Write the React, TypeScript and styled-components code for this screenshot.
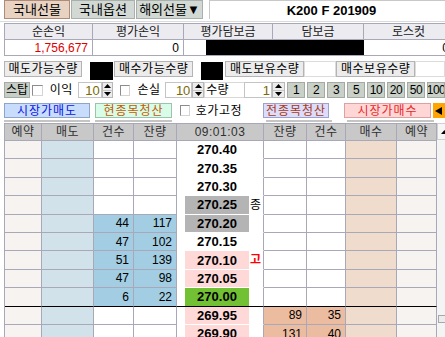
import React from "react";
import styled, { createGlobalStyle } from "styled-components";

const GlobalStyle = createGlobalStyle`
  body {
    margin: 0;
    background: #ffffff;
    font-family: "Liberation Sans", "Noto Sans CJK KR", sans-serif;
    font-size: 12px;
    color: #000;
  }
`;

const LINE = "#a8a8b8";

type Row = {
  price: string;
  kind?: "white" | "gray" | "pink" | "green";
  tag?: string;
  tagRed?: boolean;
  sellCnt?: number;
  sellQty?: number;
  buyQty?: number;
  buyCnt?: number;
  divider?: boolean;
};

const rows: Row[] = [
  { price: "270.40" },
  { price: "270.35" },
  { price: "270.30" },
  { price: "270.25", kind: "gray", tag: "종" },
  { price: "270.20", kind: "gray", sellCnt: 44, sellQty: 117 },
  { price: "270.15", sellCnt: 47, sellQty: 102 },
  { price: "270.10", kind: "pink", sellCnt: 51, sellQty: 139, tag: "고", tagRed: true },
  { price: "270.05", kind: "pink", sellCnt: 47, sellQty: 98 },
  { price: "270.00", kind: "green", sellCnt: 6, sellQty: 22, divider: true },
  { price: "269.95", kind: "pink", buyQty: 89, buyCnt: 35 },
  { price: "269.90", kind: "pink", buyQty: 131, buyCnt: 40 },
];

const priceBg = {
  white: "#ffffff",
  gray: "#b4b4b4",
  pink: "#ffd8d8",
  green: "#72c034",
};

const UpDown = ({ up }: { up?: boolean }) => (
  <svg width="7" height="4" viewBox="0 0 7 4">
    <polygon points={up ? "3.5,0 7,4 0,4" : "0,0 7,0 3.5,4"} fill="#000" />
  </svg>
);

const Spin = ({ value, input, btn }: { value: string; input: number; btn: number }) => (
  <SpinBox>
    <SpinValue $w={input}>{value}</SpinValue>
    <SpinBtns $w={btn}>
      <SpinBtn>
        <UpDown up />
      </SpinBtn>
      <SpinBtn>
        <UpDown />
      </SpinBtn>
    </SpinBtns>
  </SpinBox>
);

const App = () => {
  return (
    <Page>
      <GlobalStyle />
      <TopBar>
        <Tab $w={66} $active>
          국내선물
        </Tab>
        <Tab $w={64}>국내옵션</Tab>
        <Tab $w={67}>해외선물▼</Tab>
        <Title>K200 F 201909</Title>
      </TopBar>

      <Summary>
        <SumHead>순손익</SumHead>
        <SumHead>평가손익</SumHead>
        <SumHead>평가담보금</SumHead>
        <SumHead>담보금</SumHead>
        <SumHead>로스컷</SumHead>
        <SumValue $red>1,756,677</SumValue>
        <SumValue>0</SumValue>
        <SumMasked>
          <Mask />
        </SumMasked>
        <SumValue>0</SumValue>
      </Summary>

      <QtyRow>
        <LabelBtn $w={79}>매도가능수량</LabelBtn>
        <Blackout $ml={8} $w={23} />
        <LabelBtn $w={80} $ml={1}>
          매수가능수량
        </LabelBtn>
        <Blackout $ml={8} $w={22} />
        <LabelBtn $w={80} $ml={2}>
          매도보유수량
        </LabelBtn>
        <Field $w={32} />
        <LabelBtn $w={80}>매수보유수량</LabelBtn>
        <Field $w={30} />
      </QtyRow>

      <StopRow>
        <StopBtn>스탑</StopBtn>
        <Check $ml={2} />
        <Caption $ml={7}>이익</Caption>
        <Gap $w={5} />
        <Spin value="10" input={24} btn={11} />
        <Check $ml={7} />
        <Caption $ml={7}>손실</Caption>
        <Gap $w={5} />
        <Spin value="10" input={27} btn={12} />
        <QtyLabel>수량</QtyLabel>
        <Spin value="1" input={28} btn={13} />
        <QtyBtns>
          {["1", "2", "3", "5", "10", "20", "50", "100"].map((q) => (
            <QtyBtn key={q}>{q}</QtyBtn>
          ))}
        </QtyBtns>
      </StopRow>

      <OrderRow>
        <OrderBtn $w={86} $bg="#c8dcfc" $bd="#8ea4c8" $fg="#0a14e6">
          시장가매도
        </OrderBtn>
        <OrderBtn $w={77} $ml={5} $bg="#d8fce8" $bd="#9cc4ac" $fg="#c45a00">
          현종목청산
        </OrderBtn>
        <Check $ml={8} />
        <Caption $ml={6} $w={48}>
          호가고정
        </Caption>
        <OrderBtn $w={66} $ml={21} $bg="#dcdcfc" $bd="#a0a0c8" $fg="#a83a10">
          전종목청산
        </OrderBtn>
        <OrderBtn $w={87} $ml={15} $bg="#ffd6d6" $bd="#e0a0a0" $fg="#e82828">
          시장가매수
        </OrderBtn>
        <ArrowTab>
          <svg width="7" height="8" viewBox="0 0 7 8">
            <polygon points="7,0 7,8 0,4" fill="#000" />
          </svg>
        </ArrowTab>
      </OrderRow>
      <ShadeRow>
        <Shade $w={86} />
        <Shade $w={77} $ml={5} />
        <Shade $w={66} $ml={94} />
        <Shade $w={87} $ml={15} />
      </ShadeRow>

      <Book>
        <Grid>
          <Head>예약</Head>
          <Head>매도</Head>
          <Head>건수</Head>
          <Head>잔량</Head>
          <Head $span={3}>09:01:03</Head>
          <Head>잔량</Head>
          <Head>건수</Head>
          <Head>매수</Head>
          <Head>예약</Head>
          {rows.map((r, i) => {
            const bottom = r.divider ? "#000" : LINE;
            const mid = r.divider ? "#000" : "#fff";
            return (
              <React.Fragment key={i}>
                <Cell $bg="#f6f3f0" $bottom={bottom} />
                <Cell $bg="#d2e2ea" $bottom={bottom} />
                <Num $bg={r.sellCnt ? "#a2cde2" : "#fff"} $bottom={bottom}>
                  {r.sellCnt}
                </Num>
                <Num $bg={r.sellQty ? "#a2cde2" : "#fff"} $bottom={bottom}>
                  {r.sellQty}
                </Num>
                <Cell $bg="#fff" $bottom={mid} $noRight />
                <Price $bg={priceBg[r.kind || "white"]} $bottom={mid}>
                  {r.price}
                </Price>
                <Tag $bottom={mid} $red={r.tagRed}>
                  {r.tag}
                </Tag>
                <Num $bg={r.buyQty ? "#ecbca0" : "#fff"} $bottom={bottom}>
                  {r.buyQty}
                </Num>
                <Num $bg={r.buyCnt ? "#ecbca0" : "#fff"} $bottom={bottom}>
                  {r.buyCnt}
                </Num>
                <Cell $bg="#f0dccc" $bottom={bottom} />
                <Cell $bg="#f6f3f0" $bottom={bottom} />
              </React.Fragment>
            );
          })}
        </Grid>
        <Scrollbar>
          <ScrollArrow>
            <svg width="7" height="4" viewBox="0 0 7 4">
              <polygon points="3.5,0 7,4 0,4" fill="#000" />
            </svg>
          </ScrollArrow>
          <Thumb />
        </Scrollbar>
      </Book>
    </Page>
  );
};

export default App;

const Page = styled.div`
  width: 445px;
  height: 337px;
  overflow: hidden;
  background: #ffffff;
`;

const TopBar = styled.div`
  display: flex;
  gap: 1px;
  height: 21px;
  padding-left: 4px;
  border-bottom: 1px solid #dadada;
  box-sizing: border-box;
  height: 22px;
`;

const Tab = styled.div<{ $w: number; $active?: boolean }>`
  width: ${(p) => p.$w}px;
  height: 19px;
  box-sizing: border-box;
  display: flex;
  align-items: center;
  justify-content: center;
  font-size: 13px;
  line-height: 1;
  background: ${(p) => (p.$active ? "#e8d3c3" : "#d2d9d4")};
  border: 1px solid ${(p) => (p.$active ? "#b08c78" : "#a9b0ab")};
`;

const Title = styled.div`
  flex: 1;
  margin-left: 5px;
  height: 19px;
  box-sizing: border-box;
  border-left: 1px solid #c8c8c8;
  border-top: 1px solid #c8c8c8;
  display: flex;
  align-items: center;
  justify-content: center;
  padding-left: 8px;
  font-weight: bold;
  font-size: 13px;
`;

const Summary = styled.div`
  display: grid;
  grid-template-columns: 88px 91px 89px 91px 90px;
  grid-template-rows: 16px 16px;
  margin: 1px 0 0 4px;
  border-left: 1px solid ${LINE};
  border-top: 1px solid ${LINE};
`;

const SumHead = styled.div`
  background: #ececf0;
  border-right: 1px solid ${LINE};
  border-bottom: 1px solid ${LINE};
  display: flex;
  align-items: center;
  justify-content: center;
  font-size: 12px;
  line-height: 1;
  color: #202020;
`;

const SumValue = styled.div<{ $red?: boolean }>`
  border-right: 1px solid ${LINE};
  border-bottom: 1px solid ${LINE};
  display: flex;
  align-items: center;
  justify-content: flex-end;
  padding-right: 4px;
  font-size: 12px;
  line-height: 1;
  color: ${(p) => (p.$red ? "#e00000" : "#000")};
`;

const SumMasked = styled.div`
  grid-column: span 2;
  border-bottom: 1px solid ${LINE};
  padding-left: 22px;
  display: flex;
`;

const Mask = styled.div`
  flex: 1;
  background: #000;
`;

const QtyRow = styled.div`
  display: flex;
  align-items: flex-start;
  height: 19px;
  margin-top: 5px;
  padding-left: 4px;
`;

const LabelBtn = styled.div<{ $w: number; $ml?: number }>`
  width: ${(p) => p.$w}px;
  margin-left: ${(p) => p.$ml || 0}px;
  height: 16px;
  box-sizing: border-box;
  background: #ececec;
  border: 1px solid #b4b4b4;
  display: flex;
  align-items: center;
  justify-content: center;
  font-size: 12px;
  line-height: 1;
  letter-spacing: 0.5px;
`;

const Blackout = styled.div<{ $w: number; $ml: number }>`
  width: ${(p) => p.$w}px;
  margin-left: ${(p) => p.$ml}px;
  margin-top: 1px;
  height: 18px;
  background: #000;
`;

const Field = styled.div<{ $w: number }>`
  width: ${(p) => p.$w}px;
  height: 16px;
  box-sizing: border-box;
  border: 1px solid #dcdcdc;
  background: #fff;
`;

const StopRow = styled.div`
  display: flex;
  align-items: center;
  height: 16px;
  margin-top: 2px;
  padding-left: 4px;
`;

const StopBtn = styled.div`
  width: 27px;
  height: 16px;
  box-sizing: border-box;
  background: #c6cec6;
  border: 1px solid #a4aca4;
  display: flex;
  align-items: center;
  justify-content: center;
  font-size: 12px;
  line-height: 1;
`;

const Check = styled.span<{ $ml: number }>`
  display: block;
  width: 11px;
  height: 11px;
  box-sizing: border-box;
  margin-left: ${(p) => p.$ml}px;
  background: #fff;
  border: 1px solid #8c8c8c;
  border-right-color: #d4d4d4;
  border-bottom-color: #d4d4d4;
`;

const Caption = styled.span<{ $ml: number; $w?: number }>`
  margin-left: ${(p) => p.$ml}px;
  width: ${(p) => (p.$w ? `${p.$w}px` : "auto")};
  font-size: 12px;
  line-height: 1;
  letter-spacing: 0.5px;
  white-space: nowrap;
`;

const Gap = styled.span<{ $w: number }>`
  width: ${(p) => p.$w}px;
`;

const SpinBox = styled.div`
  display: flex;
  height: 16px;
`;

const SpinValue = styled.div<{ $w: number }>`
  width: ${(p) => p.$w}px;
  box-sizing: border-box;
  border: 1px solid #c4c4c4;
  background: #fff;
  display: flex;
  align-items: center;
  justify-content: flex-end;
  padding-right: 1px;
  font-size: 13px;
  line-height: 1;
  color: #7a6a00;
`;

const SpinBtns = styled.div<{ $w: number }>`
  width: ${(p) => p.$w}px;
  display: flex;
  flex-direction: column;
  box-sizing: border-box;
  border: 1px solid #b8b8b8;
  background: #ececec;
`;

const SpinBtn = styled.div`
  flex: 1;
  display: flex;
  align-items: center;
  justify-content: center;
  & + & {
    border-top: 1px solid #c8c8c8;
  }
`;

const QtyLabel = styled.div`
  width: 41px;
  height: 16px;
  box-sizing: border-box;
  border: 1px solid #d8d8d8;
  border-right: none;
  background: #fff;
  display: flex;
  align-items: center;
  padding-left: 1px;
  font-size: 12px;
  line-height: 1;
`;

const QtyBtns = styled.div`
  display: flex;
  gap: 2px;
  margin-left: 2px;
`;

const QtyBtn = styled.div`
  width: 18px;
  height: 16px;
  flex: none;
  box-sizing: border-box;
  background: #c8d0c8;
  border: 1px solid #a2aaa2;
  display: flex;
  align-items: center;
  justify-content: center;
  font-size: 12px;
  line-height: 1;
  overflow: hidden;
  letter-spacing: -0.5px;
`;

const OrderRow = styled.div`
  display: flex;
  align-items: center;
  height: 15px;
  margin-top: 5px;
  padding-left: 4px;
`;

const OrderBtn = styled.div<{ $w: number; $ml?: number; $bg: string; $bd: string; $fg: string }>`
  width: ${(p) => p.$w}px;
  margin-left: ${(p) => p.$ml || 0}px;
  height: 15px;
  flex: none;
  box-sizing: border-box;
  background: ${(p) => p.$bg};
  border: 1px solid ${(p) => p.$bd};
  color: ${(p) => p.$fg};
  display: flex;
  align-items: center;
  justify-content: center;
  font-size: 12px;
  line-height: 1;
  letter-spacing: 1px;
`;

const ArrowTab = styled.div`
  margin-left: 2px;
  width: 12px;
  height: 15px;
  flex: none;
  background: #ffa400;
  display: flex;
  align-items: center;
  padding-left: 2px;
  box-sizing: border-box;
`;

const ShadeRow = styled.div`
  display: flex;
  height: 2px;
  margin-top: 2px;
  padding-left: 4px;
`;

const Shade = styled.div<{ $w: number; $ml?: number }>`
  width: ${(p) => p.$w}px;
  margin-left: ${(p) => p.$ml || 0}px;
  background: #c4c4c4;
  flex: none;
`;

const Book = styled.div`
  display: flex;
  margin: 1px 0 0 4px;
`;

const Grid = styled.div`
  display: grid;
  grid-template-columns: 37px 52px 40px 43px 8px 64px 15px 43px 39px 51px 40px;
  grid-template-rows: 17px;
  grid-auto-rows: 18.4px;
  border-left: 1px solid ${LINE};
  border-top: 1px solid ${LINE};
  flex: none;
`;

const Head = styled.div<{ $span?: number }>`
  grid-column: span ${(p) => p.$span || 1};
  background: #c8c8c8;
  border-right: 1px solid ${LINE};
  border-bottom: 1px solid ${LINE};
  display: flex;
  align-items: center;
  justify-content: center;
  font-size: 12px;
  line-height: 1;
  color: #303030;
  letter-spacing: 0.5px;
`;

const Cell = styled.div<{ $bg: string; $bottom: string; $noRight?: boolean }>`
  background: ${(p) => p.$bg};
  border-right: ${(p) => (p.$noRight ? "none" : `1px solid ${LINE}`)};
  border-bottom: 1px solid ${(p) => p.$bottom};
  box-sizing: border-box;
`;

const Num = styled(Cell)`
  display: flex;
  align-items: center;
  justify-content: flex-end;
  padding-right: 4px;
  font-size: 12px;
  line-height: 1;
`;

const Price = styled(Cell).attrs({ $noRight: true })`
  display: flex;
  align-items: center;
  justify-content: center;
  font-weight: bold;
  font-size: 13px;
  line-height: 1;
`;

const Tag = styled.div<{ $bottom: string; $red?: boolean }>`
  background: #fff;
  border-right: 1px solid ${LINE};
  border-bottom: 1px solid ${(p) => p.$bottom};
  display: flex;
  align-items: center;
  padding-left: 1px;
  font-size: 12px;
  line-height: 1;
  font-weight: ${(p) => (p.$red ? "bold" : "normal")};
  color: ${(p) => (p.$red ? "#ff0000" : "#000")};
`;

const Scrollbar = styled.div`
  width: 17px;
  flex: none;
  background: #f4f4f4;
  display: flex;
  flex-direction: column;
`;

const ScrollArrow = styled.div`
  height: 17px;
  box-sizing: border-box;
  border: 1px solid #d0d0d0;
  background: #f6f6f6;
  display: flex;
  align-items: center;
  padding-left: 3px;
`;

const Thumb = styled.div`
  margin-top: 175px;
  height: 8px;
  margin-left: 1px;
  box-sizing: border-box;
  border: 1px solid #a8a8a8;
  background: #ececec;
`;
